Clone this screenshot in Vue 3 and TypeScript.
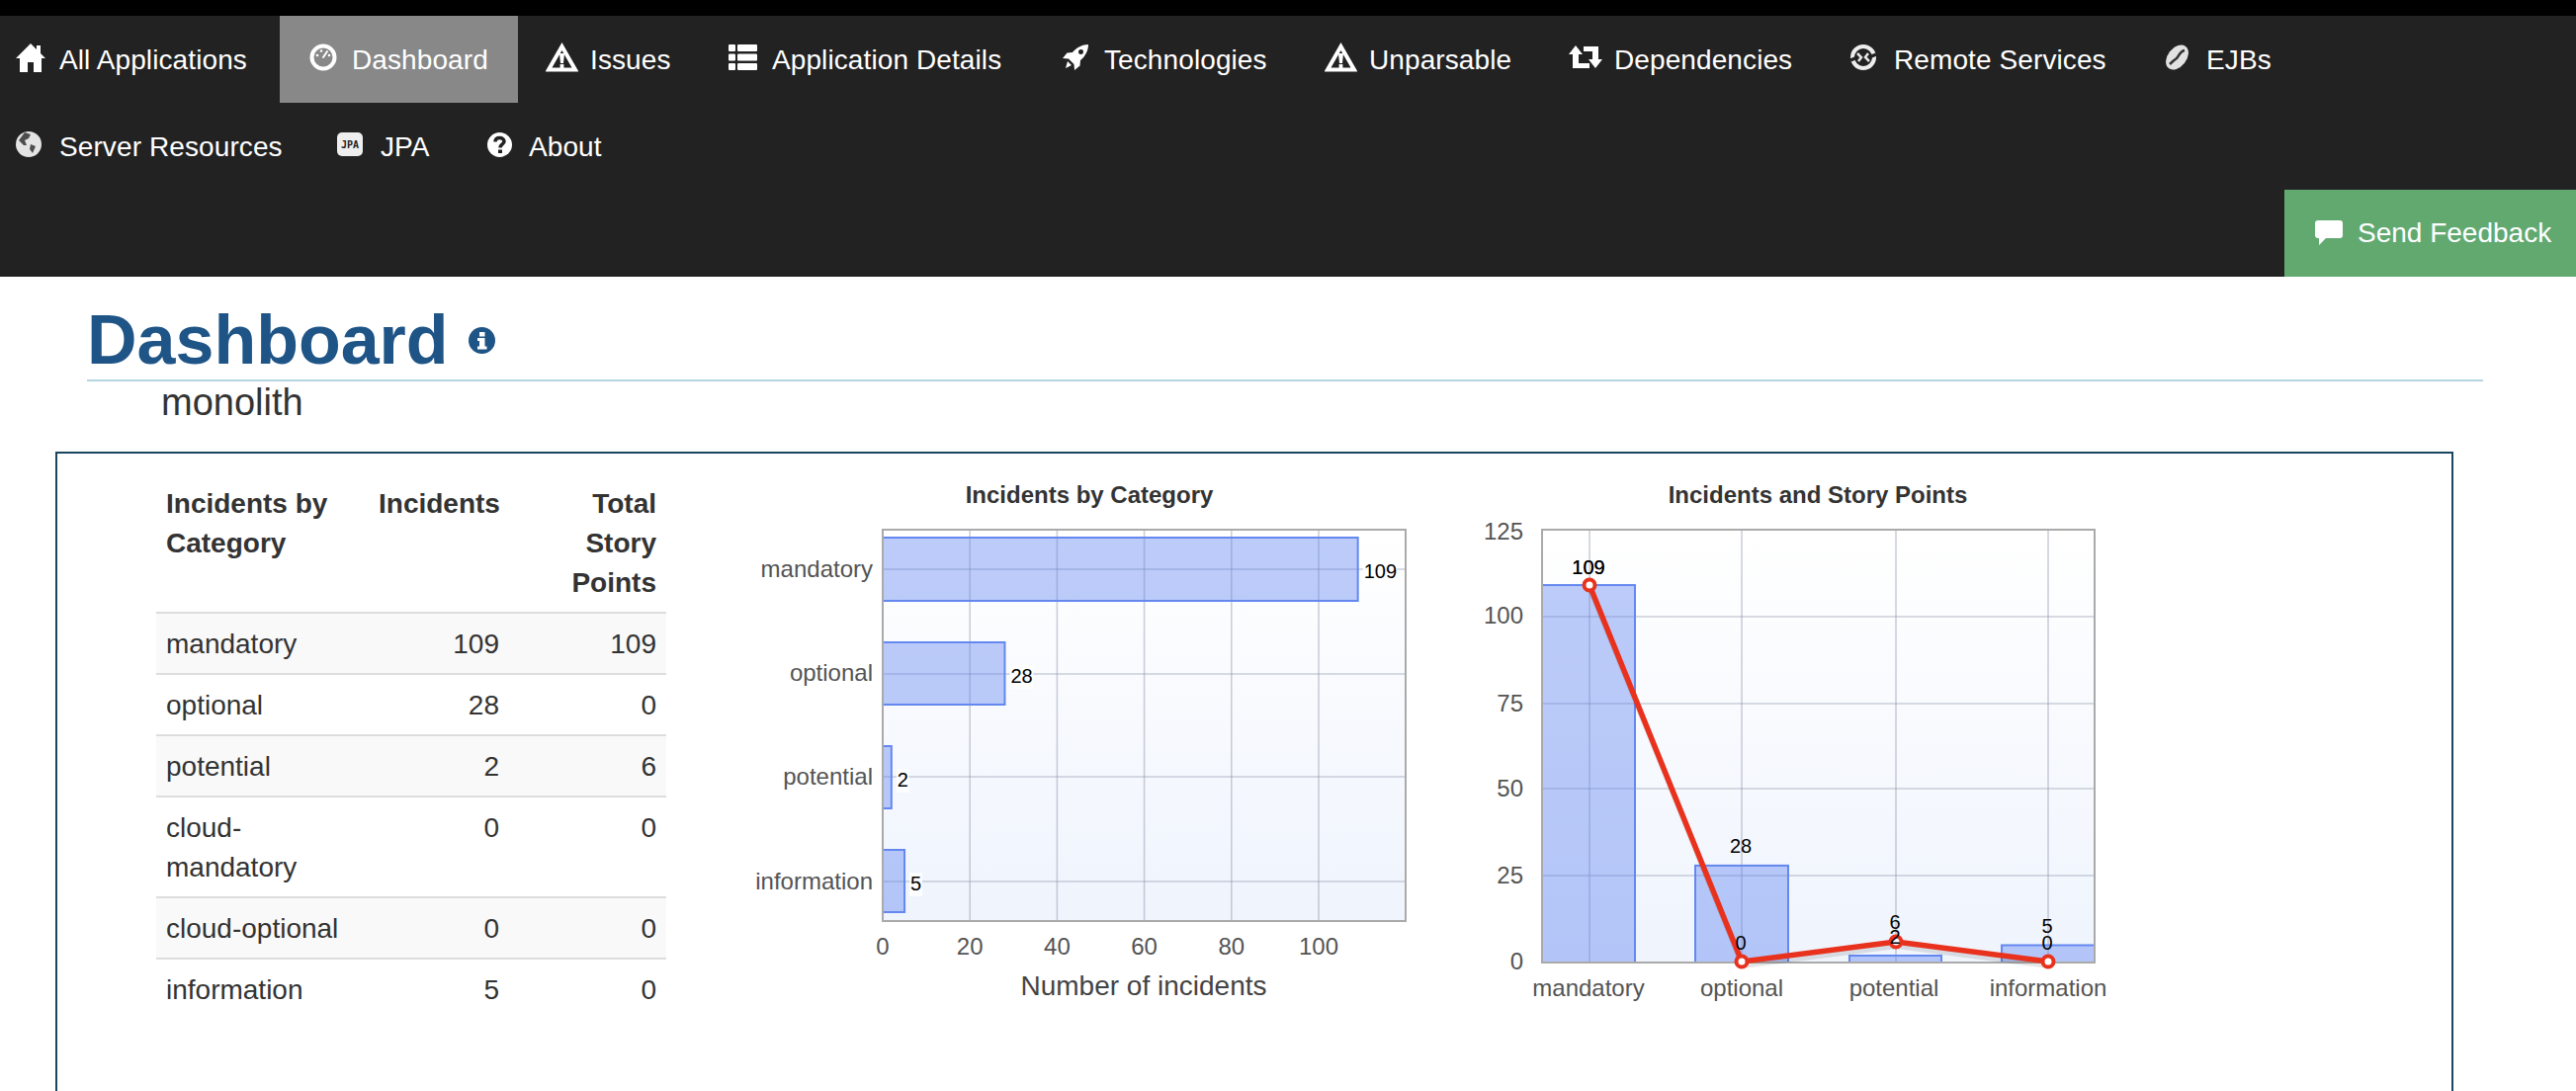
<script setup lang="ts">
interface NavItem {
  label: string
  icon: string
  width: number
  height: number
  gap: number
  textWidth: number
  shift?: number
  active?: boolean
}

interface Row {
  name: string
  incidents: number
  points: number
}

const navItems: NavItem[] = [
  { label: 'All Applications', icon: 'home', width: 30, height: 30, gap: 14, textWidth: 193 },
  { label: 'Dashboard', icon: 'gauge', width: 28, height: 28, gap: 15, textWidth: 138, active: true },
  { label: 'Issues', icon: 'warning', width: 33, height: 30, gap: 12, textWidth: 80, shift: -2 },
  { label: 'Application Details', icon: 'list', width: 29, height: 26, gap: 15, textWidth: 234 },
  { label: 'Technologies', icon: 'rocket', width: 26, height: 26, gap: 16, textWidth: 165 },
  { label: 'Unparsable', icon: 'warning', width: 33, height: 30, gap: 12, textWidth: 144, shift: -2 },
  { label: 'Dependencies', icon: 'retweet', width: 36, height: 24, gap: 11, textWidth: 180, shift: -3 },
  { label: 'Remote Services', icon: 'remote', width: 26, height: 26, gap: 18, textWidth: 214, shift: -1 },
  { label: 'EJBs', icon: 'bean', width: 25, height: 26, gap: 17, textWidth: 65 },
  { label: 'Server Resources', icon: 'globe', width: 26, height: 26, gap: 18, textWidth: 221 },
  { label: 'JPA', icon: 'jpa', width: 26, height: 24, gap: 18, textWidth: 49 },
  { label: 'About', icon: 'question', width: 25, height: 25, gap: 17, textWidth: 75, shift: -1 }
]

const rows: Row[] = [
  { name: 'mandatory', incidents: 109, points: 109 },
  { name: 'optional', incidents: 28, points: 0 },
  { name: 'potential', incidents: 2, points: 6 },
  { name: 'cloud-mandatory', incidents: 0, points: 0 },
  { name: 'cloud-optional', incidents: 0, points: 0 },
  { name: 'information', incidents: 5, points: 0 }
]

// bars of the first chart, in page pixels because the svg viewBox uses them
const hBars = [
  { name: 'mandatory', value: 109, top: 544, bottom: 608, grid: 576, labelY: 584, valueY: 585 },
  { name: 'optional', value: 28, top: 650, bottom: 713, grid: 682, labelY: 689, valueY: 691 },
  { name: 'potential', value: 2, top: 755, bottom: 818, grid: 786, labelY: 794, valueY: 796 },
  { name: 'information', value: 5, top: 860, bottom: 923, grid: 892, labelY: 900, valueY: 901 }
]
const hZero = 893
const hUnit = 4.41
const hTicks = [0, 20, 40, 60, 80, 100]

const vZero = 974
const vUnit = 3.504
const yTicks = [
  { value: 0, y: 974, text: 981 },
  { value: 25, y: 886, text: 894 },
  { value: 50, y: 798, text: 806 },
  { value: 75, y: 712, text: 720 },
  { value: 100, y: 624, text: 631 },
  { value: 125, y: 536, text: 546 }
]
const vBars = [
  { name: 'mandatory', x: 1608, left: 1560, right: 1654, incidents: 109, points: 109, textX: 1607, barLabel: 581, lineLabel: 581 },
  { name: 'optional', x: 1762, left: 1715, right: 1809, incidents: 28, points: 0, textX: 1762, barLabel: 863, lineLabel: 961 },
  { name: 'potential', x: 1918, left: 1871, right: 1964, incidents: 2, points: 6, textX: 1916, barLabel: 955, lineLabel: 940 },
  { name: 'information', x: 2072, left: 2025, right: 2119, incidents: 5, points: 0, textX: 2072, barLabel: 944, lineLabel: 961 }
]
const linePoints = vBars.map((b) => `${b.x},${vZero - b.points * vUnit - (b.points ? 0 : 1)}`).join(' ')
</script>

<template>
  <div class="page">
    <div class="top-strip"></div>
    <header class="navbar">
      <nav class="nav">
        <a v-for="item in navItems" :key="item.label" class="nav-item" :class="{ active: item.active }">
          <svg
            class="nav-icon"
            :width="item.width"
            :height="item.height"
            :style="{ marginRight: item.gap + 'px', marginLeft: (item.shift || 0) + 'px' }"
            :viewBox="`0 0 ${item.width} ${item.height}`"
          >
            <template v-if="item.icon === 'home'">
              <path fill="#fff" d="M15 1 L21 7 V3 H25 V11 L30 16 H26 V30 H18 V20 H12 V30 H4 V16 H0 Z" />
            </template>
            <template v-else-if="item.icon === 'gauge'">
              <circle cx="14" cy="14" r="11.5" fill="none" stroke="#fff" stroke-width="4" />
              <path stroke="#fff" stroke-width="2" stroke-linecap="round" d="M14 14 L18 8" />
              <circle cx="8" cy="12" r="1.3" fill="#fff" />
              <circle cx="12" cy="7.5" r="1.3" fill="#fff" />
              <circle cx="20" cy="12" r="1.3" fill="#fff" />
            </template>
            <template v-else-if="item.icon === 'warning'">
              <path fill="none" stroke="#fff" stroke-width="4" stroke-linejoin="miter" d="M16.5 4 L30 27.5 H3 Z" />
              <path fill="#fff" d="M14 11 H19 L18 21 H15 Z" />
              <rect x="14.6" y="22" width="3.8" height="4" fill="#fff" />
            </template>
            <template v-else-if="item.icon === 'list'">
              <g fill="#fff">
                <rect x="0" y="0" width="7" height="7" rx="1" />
                <rect x="9" y="0" width="20" height="7" rx="1" />
                <rect x="0" y="9.5" width="7" height="7" rx="1" />
                <rect x="9" y="9.5" width="20" height="7" rx="1" />
                <rect x="0" y="19" width="7" height="7" rx="1" />
                <rect x="9" y="19" width="20" height="7" rx="1" />
              </g>
            </template>
            <template v-else-if="item.icon === 'rocket'">
              <path
                fill="#fff"
                fill-rule="evenodd"
                d="M26 0 C20 0 14 3 10 8 L4.500 8.500 L0 14 L6 14.500 L11.500 20 L12 26 L17.500 21.500 L18 16 C23 12 26 6 26 0 Z M18.500 5 A2.500 2.500 0 1 0 18.501 10 A2.500 2.500 0 1 0 18.500 5 Z"
              />
              <path fill="#fff" d="M5 17 L9 21 L3 24 Z" />
            </template>
            <template v-else-if="item.icon === 'retweet'">
              <path fill="#fff" d="M8 0 L15 9 H11 V18 H22 V23 H5 V9 H1 Z" />
              <path fill="#fff" d="M16 1 H31 V14 H35 L28 23 L21 14 H25 V6 H16 Z" />
            </template>
            <template v-else-if="item.icon === 'remote'">
              <g class="soft">
                <circle cx="13" cy="13" r="11" fill="none" stroke="#eee" stroke-width="4" />
                <path stroke="#222" stroke-width="3.500" d="M0 16 L7 13 M26 10 L19 13" />
                <path fill="none" stroke="#e6e6e6" stroke-width="2.500" d="M7 9 L11 13 L8 17 M19 17 L15 13 L18 9" />
              </g>
            </template>
            <template v-else-if="item.icon === 'bean'">
              <g class="soft">
                <ellipse cx="12.500" cy="13" rx="9.500" ry="14" transform="rotate(38 12.500 13)" fill="#e2e2e2" />
                <path fill="none" stroke="#333" stroke-width="2.500" d="M20 6 C15 7 15 11 12 14 C9 16 8 17 5 20" />
              </g>
            </template>
            <template v-else-if="item.icon === 'globe'">
              <g class="soft">
                <circle cx="13" cy="13" r="13" fill="#e4e4e4" />
                <path fill="#333" d="M9 1 L15 3 L13 7 L9 9 L11 14 L8 14 L3 9 Z M15 13 L20 15 L17 22 L14 18 Z" opacity="0.85" />
              </g>
            </template>
            <template v-else-if="item.icon === 'jpa'">
              <rect x="0" y="0" width="26" height="24" rx="5" fill="#eee" />
              <text x="13" y="16" text-anchor="middle" class="jpa-mark">JPA</text>
            </template>
            <template v-else-if="item.icon === 'question'">
              <circle cx="12.500" cy="12.500" r="12.500" fill="#fff" />
              <path fill="none" stroke="#222" stroke-width="3.500" d="M8 9.500 C8 6.500 10 5.500 12.500 5.500 C15 5.500 17 7 17 9.200 C17 12 13 12 13 15.500" />
              <rect x="11" y="17.500" width="4" height="3.500" fill="#222" />
            </template>
          </svg>
          <span class="nav-text" :style="{ width: item.textWidth + 'px' }">{{ item.label }}</span>
        </a>
      </nav>
      <a class="feedback">
        <svg class="feedback-icon" width="28" height="26" viewBox="0 0 28 26">
          <path fill="#fff" d="M3 0 H25 Q28 0 28 3 V15 Q28 18 25 18 H11 L4 25 V18 H3 Q0 18 0 15 V3 Q0 0 3 0 Z" />
        </svg>
        Send Feedback
      </a>
    </header>

    <main class="content">
      <div class="heading">
        <h1 class="title">
          Dashboard
          <svg class="info-icon" width="27" height="27" viewBox="0 0 27 27">
            <circle cx="13.500" cy="13.500" r="13.500" fill="#1f5486" />
            <rect x="11" y="5" width="5.500" height="4.500" fill="#fff" />
            <path fill="#fff" d="M9 11 H16.500 V19.500 H18.500 V22.500 H9 V19.500 H11 V14 H9 Z" />
          </svg>
        </h1>
        <div class="subtitle">monolith</div>
      </div>

      <section class="panel">
        <table class="summary">
          <thead>
            <tr>
              <th class="col-name">Incidents by Category</th>
              <th class="col-num">Incidents</th>
              <th class="col-points">Total Story Points</th>
            </tr>
          </thead>
          <tbody>
            <tr v-for="row in rows" :key="row.name">
              <td>{{ row.name }}</td>
              <td class="num">{{ row.incidents }}</td>
              <td class="num">{{ row.points }}</td>
            </tr>
          </tbody>
        </table>

        <svg class="chart chart-bars" width="700" height="560" viewBox="740 480 700 560">
          <defs>
            <linearGradient id="plotBg" x1="0" y1="0" x2="0" y2="1">
              <stop offset="0" stop-color="#ffffff" />
              <stop offset="1" stop-color="#eff4fd" />
            </linearGradient>
          </defs>
          <text x="1102" y="509" text-anchor="middle" class="chart-title">Incidents by Category</text>
          <rect x="893" y="536" width="529" height="396" fill="url(#plotBg)" />
          <line v-for="t in hTicks.slice(1)" :key="t" :x1="hZero + t * hUnit" :x2="hZero + t * hUnit" y1="536" y2="932" class="grid" />
          <line v-for="b in hBars" :key="b.name" x1="893" x2="1422" :y1="b.grid" :y2="b.grid" class="grid" />
          <rect
            v-for="b in hBars"
            :key="b.name"
            x="893"
            :y="b.top"
            :width="b.value * hUnit"
            :height="b.bottom - b.top"
            class="bar"
          />
          <rect x="893" y="536" width="529" height="396" class="frame" />
          <g v-for="b in hBars" :key="b.name">
            <text x="883" :y="b.labelY" text-anchor="end" class="tick">{{ b.name }}</text>
            <rect :x="hZero + b.value * hUnit + 5" :y="b.valueY - 18" :width="String(b.value).length * 11 + 2" height="24" fill="#fff" opacity="0.8" />
            <text :x="hZero + b.value * hUnit + 6" :y="b.valueY" class="value">{{ b.value }}</text>
          </g>
          <text v-for="t in hTicks" :key="t" :x="hZero + t * hUnit" y="966" text-anchor="middle" class="tick">{{ t }}</text>
          <text x="1157" y="1007" text-anchor="middle" class="axis-title">Number of incidents</text>
        </svg>

        <svg class="chart chart-mixed" width="660" height="560" viewBox="1500 480 660 560">
          <text x="1839" y="509" text-anchor="middle" class="chart-title">Incidents and Story Points</text>
          <rect x="1560" y="536" width="559" height="438" fill="url(#plotBg)" />
          <line v-for="t in yTicks.slice(1, 5)" :key="t.value" x1="1560" x2="2119" :y1="t.y" :y2="t.y" class="grid" />
          <line v-for="b in vBars" :key="b.name" :x1="b.x" :x2="b.x" y1="536" y2="974" class="grid" />
          <rect
            v-for="b in vBars"
            :key="b.name"
            :x="b.left"
            :y="vZero - b.incidents * vUnit"
            :width="b.right - b.left"
            :height="b.incidents * vUnit"
            class="bar"
          />
          <rect x="1560" y="536" width="559" height="438" class="frame" />
          <polyline :points="linePoints" class="line-shadow" />
          <polyline :points="linePoints" class="line" />
          <g v-for="b in vBars" :key="b.name">
            <circle :cx="b.x" :cy="vZero - b.points * vUnit - (b.points ? 0 : 1)" r="5.500" class="marker" />
            <text :x="b.x - 1" :y="b.barLabel" text-anchor="middle" class="value">{{ b.incidents }}</text>
            <text :x="b.x - 1" :y="b.lineLabel" text-anchor="middle" class="value">{{ b.points }}</text>
            <text :x="b.textX" y="1008" text-anchor="middle" class="tick">{{ b.name }}</text>
          </g>
          <text v-for="t in yTicks" :key="t.value" x="1541" :y="t.text" text-anchor="end" class="tick">{{ t.value }}</text>
        </svg>
      </section>
    </main>
  </div>
</template>

<style scoped>
.page {
  height: 1104px;
  overflow: hidden;
  font-family: "Liberation Sans", Arial, sans-serif;
  font-size: 28px;
  line-height: 40px;
  color: #333;
  background: #fff;
}

.top-strip {
  height: 16px;
  background: #000;
}

.navbar {
  display: flex;
  flex-direction: column;
  height: 264px;
  background: #222;
}

.nav {
  display: flex;
  flex-wrap: wrap;
  margin-left: -14px;
}

.nav-item {
  display: flex;
  align-items: center;
  height: 88px;
  padding: 0 30px;
  color: #fff;
}

.nav-item.active {
  background: #888;
}

.nav-icon {
  flex: none;
  margin-top: -4px;
}

.nav-text {
  flex: none;
  padding-top: 2px;
  white-space: nowrap;
  letter-spacing: 0.1px;
}

.soft {
  filter: blur(0.5px);
}

.jpa-mark {
  font-family: "DejaVu Sans Mono", monospace;
  font-size: 10px;
  font-weight: 700;
  fill: #222;
}

.feedback {
  display: flex;
  align-items: center;
  align-self: flex-end;
  width: 295px;
  height: 88px;
  padding-left: 31px;
  box-sizing: border-box;
  background: #62a970;
  color: #fff;
}

.feedback-icon {
  margin-right: 15px;
}

.content {
  padding-left: 56px;
}

.heading {
  width: 2424px;
  margin-left: 32px;
}

.title {
  display: flex;
  align-items: center;
  margin: 0;
  padding-top: 25px;
  height: 79px;
  font-size: 70px;
  line-height: 79px;
  font-weight: 700;
  color: #1f5486;
  border-bottom: 2px solid #b5d5e0;
}

.info-icon {
  margin-left: 20px;
}

.subtitle {
  margin: 1px 0 0 75px;
  font-size: 38px;
  line-height: 40px;
  color: #333;
}

.panel {
  display: flex;
  align-items: flex-start;
  width: 2426px;
  height: 700px;
  box-sizing: border-box;
  margin-top: 30px;
  padding: 21px 0 0 100px;
  border: 2px solid #1c4560;
}

.summary {
  flex: none;
  width: 516px;
  border-collapse: collapse;
  table-layout: fixed;
}

.summary th,
.summary td {
  padding: 11px 10px 9px;
  vertical-align: top;
  text-align: left;
  box-sizing: border-box;
}

.summary th {
  padding-top: 10px;
  font-weight: 700;
}

.summary td {
  border-top: 2px solid #ddd;
}

.summary tbody tr:nth-child(odd) {
  background: #f9f9f9;
}

.summary .col-name {
  width: 215px;
}

.summary .col-num {
  width: 142px;
  text-align: right;
}

.summary .col-points {
  text-align: right;
}

.summary .num {
  text-align: right;
}

.chart {
  flex: none;
}

.chart-bars {
  margin-left: 66px;
}

.chart-mixed {
  margin-left: 60px;
}

.chart-title {
  font-size: 24px;
  font-weight: 700;
  fill: #333;
}

.tick {
  font-size: 24px;
  fill: #545454;
}

.axis-title {
  font-size: 28px;
  fill: #444;
}

.value {
  font-size: 20px;
  fill: #000;
}

.grid {
  stroke: #8890a4;
  stroke-opacity: 0.42;
  stroke-width: 1.6;
}

.bar {
  fill: #5a7ff0;
  fill-opacity: 0.4;
  stroke: #6488f0;
  stroke-width: 2;
}

.frame {
  fill: none;
  stroke: #aaa;
  stroke-width: 2;
}

.line {
  fill: none;
  stroke: #e8321e;
  stroke-width: 5.5;
  stroke-linejoin: round;
}

.line-shadow {
  fill: none;
  stroke: #000;
  stroke-opacity: 0.1;
  stroke-width: 6;
  transform: translate(1px, 4px);
}

.marker {
  fill: #fff;
  stroke: #e8321e;
  stroke-width: 4;
}
</style>
